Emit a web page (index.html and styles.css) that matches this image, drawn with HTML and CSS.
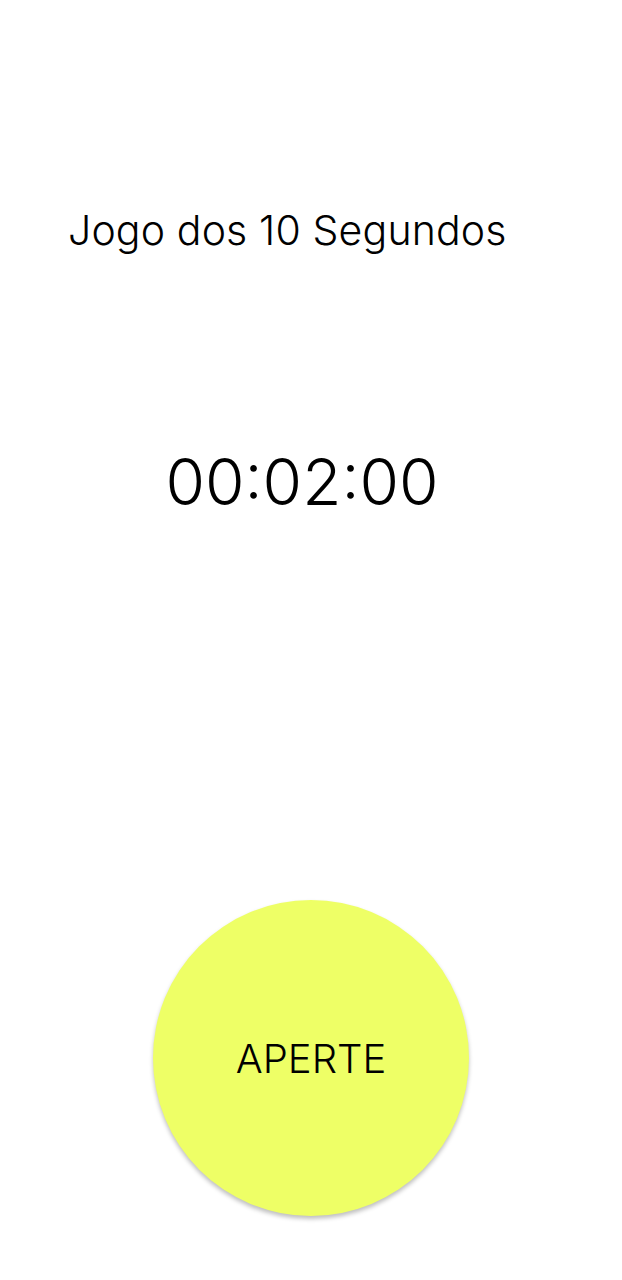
FILE: index.html
```html
<!DOCTYPE html>
<html lang="pt">
<head>
<meta charset="utf-8">
<title>Jogo dos 10 Segundos</title>
<link rel="stylesheet" href="styles.css">
</head>
<body>
<main class="screen">
  <h1 class="title">Jogo dos 10 Segundos</h1>
  <div class="timer">00:02:00</div>
  <div class="spacer"></div>
  <button class="press">APERTE</button>
</main>
</body>
</html>
```

FILE: styles.css
```css
html, body {
  margin: 0;
  padding: 0;
  background: #ffffff;
}
.screen {
  width: 622px;
  height: 1280px;
  display: flex;
  flex-direction: column;
  font-family: Inter, "Noto Sans", sans-serif;
  color: #000;
}
.title {
  margin: 0;
  padding: 204px 0 0 68px;
  font-size: 41px;
  font-weight: 300;
  line-height: 52px;
  letter-spacing: 0.15px;
}
.timer {
  margin-top: 188px;
  padding-right: 18px;
  text-align: center;
  font-size: 64px;
  font-weight: 300;
  line-height: 76px;
}
.spacer {
  height: 380px;
}
.press {
  align-self: center;
  width: 316px;
  height: 316px;
  border-radius: 50%;
  border: none;
  background: #eeff66;
  box-shadow: 0 3px 4px rgba(0,0,0,0.25);
  font-family: Inter, "Noto Sans", sans-serif;
  font-size: 40px;
  font-weight: 300;
  color: #000;
  padding: 0;
}
```
